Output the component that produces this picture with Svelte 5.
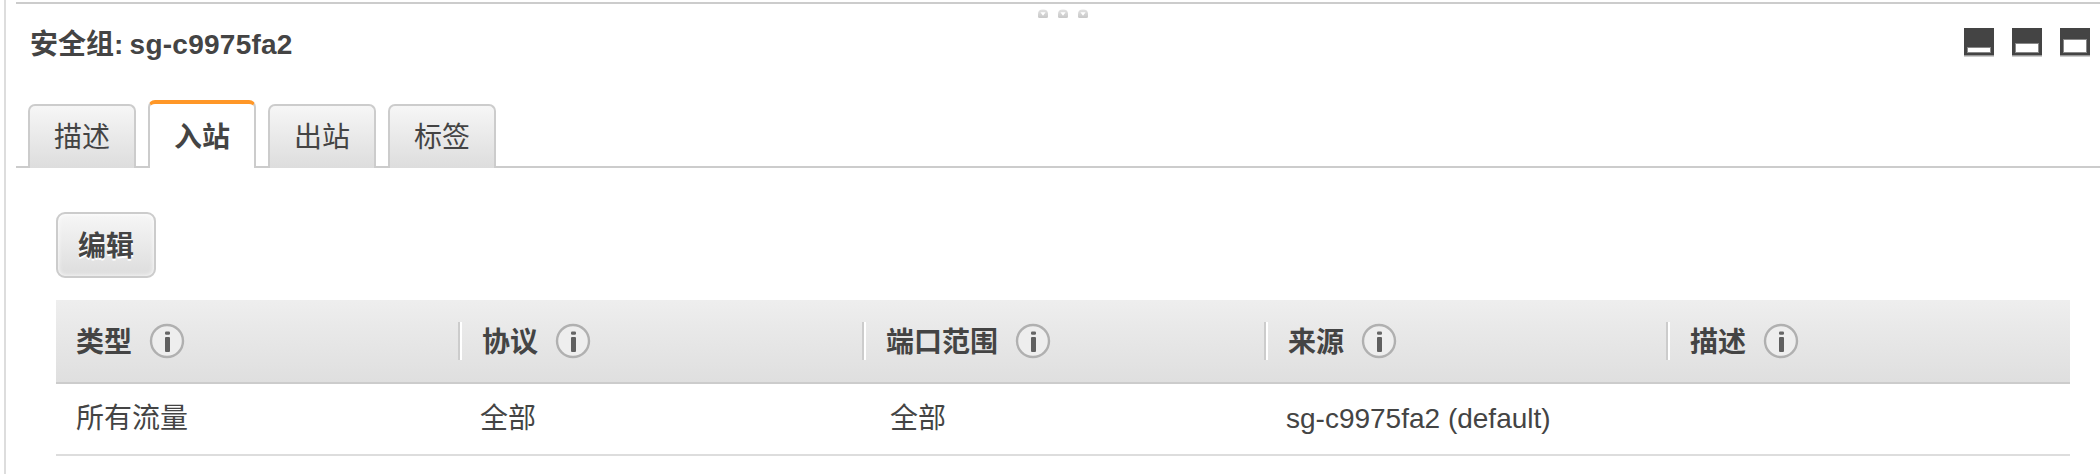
<script>
  const tabs = ['描述', '入站', '出站', '标签'];
  const active = '入站';

  const columns = ['类型', '协议', '端口范围', '来源', '描述'];
  const rows = [['所有流量', '全部', '全部', 'sg-c9975fa2 (default)', '']];

  // Height of the open part in each panel-size icon
  const sizes = [4, 8, 12];
</script>

<div class="panel">
  <header>
    <h1>安全组: <span>sg-c9975fa2</span></h1>
    <div class="sizes">
      {#each sizes as h}
        <svg width="30" height="30" viewBox="0 0 30 30">
          <rect width="30" height="27" fill="#444" />
          <rect y="27" width="30" height="1" fill="#999" />
          <rect y="28" width="30" height="1" fill="#ccc" />
          <rect x="3" y={23 - h} width="24" height={h + 2} fill="#888" />
          <rect x="4" y={24 - h} width="22" height={h} fill="#fff" />
        </svg>
      {/each}
    </div>
    <svg class="grip" width="52" height="10" viewBox="0 0 52 10">
      <defs>
        <linearGradient id="bead" x1="0" y1="0" x2="0" y2="1">
          <stop offset="0" stop-color="#e2e2e2" />
          <stop offset="1" stop-color="#c8c8c8" />
        </linearGradient>
      </defs>
      {#each [6, 26, 46] as x}
        <path d="M{x - 3.5} 9q-1.5 0-1.5-1.5V5q0-4.4 5-4.4t5 4.4v2.5q0 1.500-1.500 1.500z" fill="url(#bead)" />
        <path d="M{x - 2.6} 3.2h5.200l-2.600 3.600z" fill="#fff" />
      {/each}
    </svg>
  </header>

  <nav>
    {#each tabs as tab}
      <div class="tab" class:active={tab === active}>{tab}</div>
    {/each}
  </nav>

  <main>
    <button>编辑</button>
    <div class="table">
      <div class="row head">
        {#each columns as column}
          <div class="cell">
            <span>{column}</span>
            <svg width="36" height="36" viewBox="0 0 36 36">
              <circle cx="18" cy="18" r="16" fill="#eee" stroke="#b0b0b0" stroke-width="2.4" />
              <rect x="16" y="8.4" width="5" height="3.4" rx="1.2" fill="#666" />
              <rect x="16" y="14" width="5" height="15" rx="1" fill="#606060" />
            </svg>
          </div>
        {/each}
      </div>
      {#each rows as row}
        <div class="row body">
          {#each row as value}
            <div class="cell">{value}</div>
          {/each}
        </div>
      {/each}
    </div>
  </main>
</div>

<style>
  :global(body) {
    margin: 0;
    background: #fff;
  }

  .panel {
    box-sizing: border-box;
    height: 474px;
    margin-left: 4px;
    padding: 2px 0 0 10px;
    border-left: 2px solid #ddd;
    overflow: hidden;
    color: #444;
    font: 28px/40px 'Liberation Sans', 'Noto Sans CJK SC', sans-serif;
  }

  header {
    position: relative;
    box-sizing: border-box;
    height: 98px;
    padding: 20px 10px 0 14px;
    border-top: 2px solid #ccc;
    display: flex;
    justify-content: space-between;
    align-items: flex-start;
  }

  h1 {
    margin: 0;
    padding-top: 1px;
    font-size: 28px;
    font-weight: 700;
    word-spacing: -1.5px;
  }

  h1 span {
    letter-spacing: 0.25px;
  }

  .sizes {
    display: flex;
    gap: 18px;
    padding-top: 4px;
  }

  .grip {
    position: absolute;
    left: 1021px;
    top: 5px;
  }

  nav {
    display: flex;
    align-items: flex-end;
    gap: 12px;
    height: 68px;
    padding-left: 12px;
    background: linear-gradient(#ccc, #ccc) bottom / 100% 2px no-repeat;
  }

  .tab {
    box-sizing: border-box;
    width: 108px;
    height: 64px;
    padding-top: 12px;
    border: 2px solid #ccc;
    border-bottom: 0;
    border-radius: 7px 7px 0 0;
    background: linear-gradient(#f6f6f6, #ddd);
    text-align: center;
  }

  .active {
    height: 68px;
    padding-top: 14px;
    border-top: 4px solid #ff9727;
    background: #fff;
    font-weight: 700;
  }

  main {
    padding: 44px 30px 0 40px;
  }

  button {
    display: block;
    width: 100px;
    height: 66px;
    padding: 4px 0 0;
    border: 2px solid #ccc;
    border-radius: 9px;
    background: linear-gradient(#f6f6f6, #ddd);
    box-shadow: inset 0 0 5px #fff;
    color: #444;
    font: inherit;
    font-weight: 700;
    text-shadow: 0 2px 0 #fff;
  }

  .table {
    margin-top: 22px;
  }

  .row {
    display: grid;
    grid-template-columns: 402px 404px 402px 402px 1fr;
  }

  .head {
    height: 82px;
    border-bottom: 2px solid #ccc;
    background: linear-gradient(#eee, #dfdfdf);
    font-weight: 700;
    align-items: center;
  }

  .head .cell {
    display: flex;
    align-items: center;
    gap: 17px;
    height: 38px;
    padding-left: 22px;
    border-left: 2px solid #ccc;
    box-shadow: inset 2px 0 0 #fff;
  }

  .head .cell span {
    padding-top: 3px;
  }

  .head .cell:first-child {
    padding-left: 20px;
    border-left: 0;
    box-shadow: none;
  }

  .body {
    height: 70px;
    border-bottom: 2px solid #ddd;
    align-items: center;
  }

  .body .cell {
    padding-left: 22px;
  }

  .body .cell:first-child {
    padding-left: 20px;
  }

  .body .cell:nth-child(3) {
    padding-left: 28px;
  }

  .body .cell:nth-child(4) {
    padding-left: 22px;
  }
</style>
